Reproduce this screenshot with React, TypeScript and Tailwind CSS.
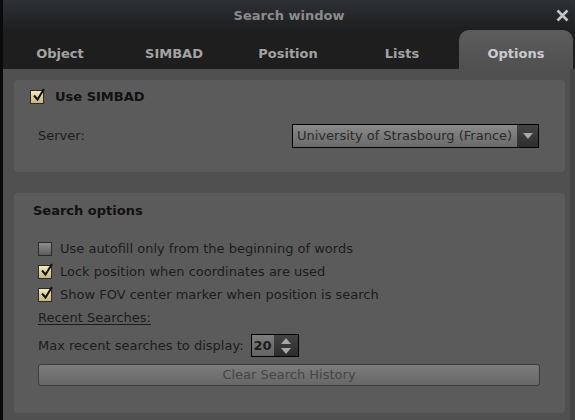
import React from 'react';

const tabs = ['Object', 'SIMBAD', 'Position', 'Lists', 'Options'];

const CheckBox: React.FC<{ checked: boolean }> = ({ checked }) => (
  <span
    className={`relative inline-block w-[14px] h-[14px] shrink-0 border border-[#2a2a2a] ${
      checked ? 'bg-gradient-to-b from-[#f4ecb4] to-[#c9b676]' : 'bg-gradient-to-b from-[#8e8e8e] to-[#5e5e5e]'
    }`}
  >
    {checked && (
      <svg viewBox="0 0 14 14" className="absolute left-[1px] top-[-3px] w-[14px] h-[14px]">
        <path d="M2 7.5 L5.5 11.5 L12 1" fill="none" stroke="#111" strokeWidth="2" />
      </svg>
    )}
  </span>
);

const CheckRow: React.FC<{ checked: boolean; label: string }> = ({ checked, label }) => (
  <div className="flex items-center gap-[8px] h-[23px]">
    <CheckBox checked={checked} />
    <span className="text-[13px] text-[#1c1c1c]">{label}</span>
  </div>
);

export default function App() {
  return (
    <div
      className="w-[575px] h-[420px] bg-[#0a0a0a] overflow-hidden flex flex-col pl-[3px]"
      style={{ fontFamily: '"DejaVu Sans", "Liberation Sans", sans-serif' }}
    >
      {/* title bar */}
      <div className="relative h-[30px] shrink-0 bg-gradient-to-b from-[#2e3134] to-[#1d1e20] flex items-center justify-center pt-[2px]">
        <span className="text-[13px] font-bold text-[#8c8c8c]">Search window</span>
        <svg viewBox="0 0 13 13" className="absolute right-[6px] top-[9px] w-[13px] h-[13px]">
          <path d="M1.5 1.5 L11.5 11.5 M11.5 1.5 L1.5 11.5" stroke="#c4c4c4" strokeWidth="2.6" />
        </svg>
      </div>

      {/* tabs */}
      <div className="h-[39px] shrink-0 bg-[#1e1e1e] flex pr-[2px]">
        {tabs.map((t) => (
          <div
            key={t}
            className={`w-[114px] flex items-center justify-center pt-[8px] text-[13px] font-bold ${
              t === 'Options'
                ? 'rounded-t-[10px] bg-gradient-to-b from-[#5c5c5c] to-[#505050] text-[#c9ccd0]'
                : 'text-[#a3a3a3]'
            }`}
          >
            {t}
          </div>
        ))}
      </div>

      {/* content */}
      <div className="flex-1 bg-[#505050] flex">
        <div className="flex-1 pl-[11px] pr-[5px] pt-[11px] flex flex-col">
          <div className="h-[92px] rounded-[4px] bg-[#5b5b5b] pl-[16px] pr-[26px] pt-[10px]">
            <div className="flex items-center gap-[11px] h-[14px]">
              <CheckBox checked />
              <span className="text-[13px] font-bold text-[#111]">Use SIMBAD</span>
            </div>
            <div className="flex items-center justify-between mt-[20px] pl-[8px]">
              <span className="text-[13px] text-[#1c1c1c]">Server:</span>
              <div className="flex w-[247px] h-[24px] border border-black">
                <div className="flex-1 flex items-center pl-[4px] bg-gradient-to-b from-[#8a8a8a] to-[#6a6a6a] text-[13px] text-[#2a2a2a] whitespace-nowrap">
                  University of Strasbourg (France)
                </div>
                <div className="w-[21px] flex items-center justify-center bg-gradient-to-b from-[#454545] to-[#2e2e2e]">
                  <svg viewBox="0 0 10 6" className="w-[10px] h-[6px]">
                    <path d="M0 0 L10 0 L5 6 Z" fill="#a8a8a8" />
                  </svg>
                </div>
              </div>
            </div>
          </div>

          <div className="mt-[21px] h-[220px] rounded-[4px] bg-[#5b5b5b] pl-[19px] pr-[25px] pt-[9px]">
            <div className="text-[13px] font-bold text-[#111] leading-[18px]">Search options</div>
            <div className="pl-[5px] mt-[17px] flex flex-col">
              <CheckRow checked={false} label="Use autofill only from the beginning of words" />
              <CheckRow checked label="Lock position when coordinates are used" />
              <CheckRow checked label="Show FOV center marker when position is search" />
              <div className="h-[24px] flex items-center">
                <span className="text-[13px] text-[#1c1c1c] underline underline-offset-2">Recent Searches:</span>
              </div>
              <div className="flex items-center gap-[7px] mt-[4px] h-[23px]">
                <span className="text-[13px] text-[#1c1c1c]">Max recent searches to display:</span>
                <div className="flex w-[48px] h-[23px] border border-black">
                  <div className="w-[22px] flex items-center justify-center bg-gradient-to-b from-[#7e7e7e] to-[#646464] text-[13px] font-bold text-[#1c1c1c]">
                    20
                  </div>
                  <div className="flex-1 flex flex-col items-center justify-center gap-[4px] bg-gradient-to-b from-[#444] to-[#2c2c2c]">
                    <svg viewBox="0 0 10 6" className="w-[10px] h-[6px]">
                      <path d="M0 6 L10 6 L5 0 Z" fill="#a8a8a8" />
                    </svg>
                    <svg viewBox="0 0 10 6" className="w-[10px] h-[6px]">
                      <path d="M0 0 L10 0 L5 6 Z" fill="#a8a8a8" />
                    </svg>
                  </div>
                </div>
              </div>
              <div className="mt-[7px] h-[22px] rounded-[3px] border border-[#3c3c3c] bg-gradient-to-b from-[#7c7c7c] to-[#676767] flex items-center justify-center text-[13px] text-[#454545]">
                Clear Search History
              </div>
            </div>
          </div>
        </div>
        <div className="w-[5px] bg-[#454545]" />
      </div>
    </div>
  );
}
